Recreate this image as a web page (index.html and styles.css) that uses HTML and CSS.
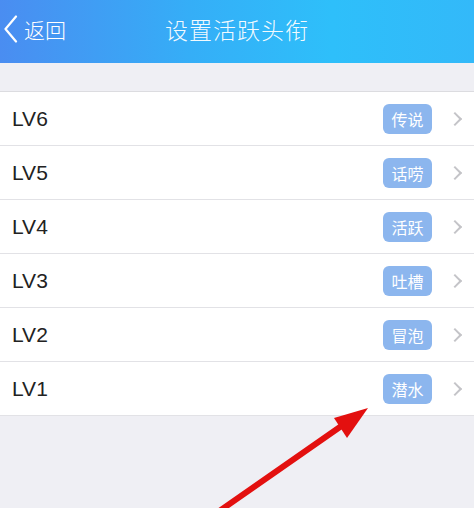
FILE: index.html
```html
<!DOCTYPE html>
<html lang="zh-CN">
<head>
    <meta charset="UTF-8">
    <meta name="viewport" content="width=device-width, initial-scale=1.0">
    <title>设置活跃头衔</title>
    <link rel="stylesheet" href="styles.css">
</head>
<body>

    <div class="page">
        <!-- Top bar -->
        <div class="nav-bar">
            <div class="back">
                <svg class="back-icon" width="16" height="28" viewBox="0 0 16 28">
                    <path d="M13 1.5 L2.5 14 L13 26.5" fill="none" stroke="#fff" stroke-width="2.2" stroke-linecap="round" stroke-linejoin="round"/>
                </svg>
                <span>返回</span>
            </div>
            <div class="nav-title">设置活跃头衔</div>
        </div>

        <!-- Level list -->
        <div class="level-list">
            <div class="level-row">
                <span class="level-name">LV6</span>
                <span class="badge">传说</span>
                <span class="chevron"></span>
            </div>
            <div class="level-row">
                <span class="level-name">LV5</span>
                <span class="badge">话唠</span>
                <span class="chevron"></span>
            </div>
            <div class="level-row">
                <span class="level-name">LV4</span>
                <span class="badge">活跃</span>
                <span class="chevron"></span>
            </div>
            <div class="level-row">
                <span class="level-name">LV3</span>
                <span class="badge">吐槽</span>
                <span class="chevron"></span>
            </div>
            <div class="level-row">
                <span class="level-name">LV2</span>
                <span class="badge">冒泡</span>
                <span class="chevron"></span>
            </div>
            <div class="level-row">
                <span class="level-name">LV1</span>
                <span class="badge">潜水</span>
                <span class="chevron"></span>
            </div>
        </div>

        <!-- Red pointer arrow drawn over the page -->
        <svg class="pointer" width="474" height="508" viewBox="0 0 474 508">
            <line x1="218" y1="512" x2="350" y2="420" stroke="#e3100f" stroke-width="6" stroke-linecap="round"/>
            <polygon points="368,408 334,418 347,438" fill="#e3100f"/>
        </svg>
    </div>

</body>
</html>
```

FILE: styles.css
```css
body {
    margin: 0;
    padding: 0;
    font-family: "Noto Sans CJK SC", "Noto Sans", sans-serif;
    background-color: #efeff4;
}
.page {
    position: relative;
    width: 474px;
    height: 508px;
    overflow: hidden;
    background-color: #efeff4;
}
.nav-bar {
    position: relative;
    height: 63px;
    display: flex;
    align-items: center;
    justify-content: center;
    background: linear-gradient(90deg, #4a8df1 0%, #35aef7 40%, #2ebffa 70%, #33b9f9 100%);
    color: #fff;
}
.back {
    position: absolute;
    left: 3px;
    top: 0;
    height: 58px;
    display: flex;
    align-items: center;
    gap: 5px;
    font-size: 21px;
    font-weight: 300;
}
.back-icon {
    display: block;
}
.nav-title {
    font-size: 23px;
    font-weight: 300;
    margin-top: -5px;
    color: rgba(255, 255, 255, 0.95);
    letter-spacing: 1px;
}
.level-list {
    margin-top: 28px;
    background-color: #fff;
    border-top: 1px solid #dcdce0;
}
.level-row {
    height: 54px;
    box-sizing: border-box;
    display: flex;
    align-items: center;
    padding: 0 12px 0 12px;
    border-bottom: 1px solid #e2e2e6;
}
.level-name {
    flex: 1;
    font-family: "Liberation Sans", Arial, sans-serif;
    font-size: 21px;
    color: #222;
}
.badge {
    width: 49px;
    height: 30px;
    line-height: 30px;
    text-align: center;
    border-radius: 6px;
    background-color: #8cb6ee;
    color: #fff;
    font-size: 16px;
    margin-right: 18px;
}
.chevron {
    width: 8px;
    height: 8px;
    border-top: 2px solid #c4c4c8;
    border-right: 2px solid #c4c4c8;
    transform: rotate(45deg);
    margin-right: 2px;
}
.pointer {
    position: absolute;
    left: 0;
    top: 0;
}
```
